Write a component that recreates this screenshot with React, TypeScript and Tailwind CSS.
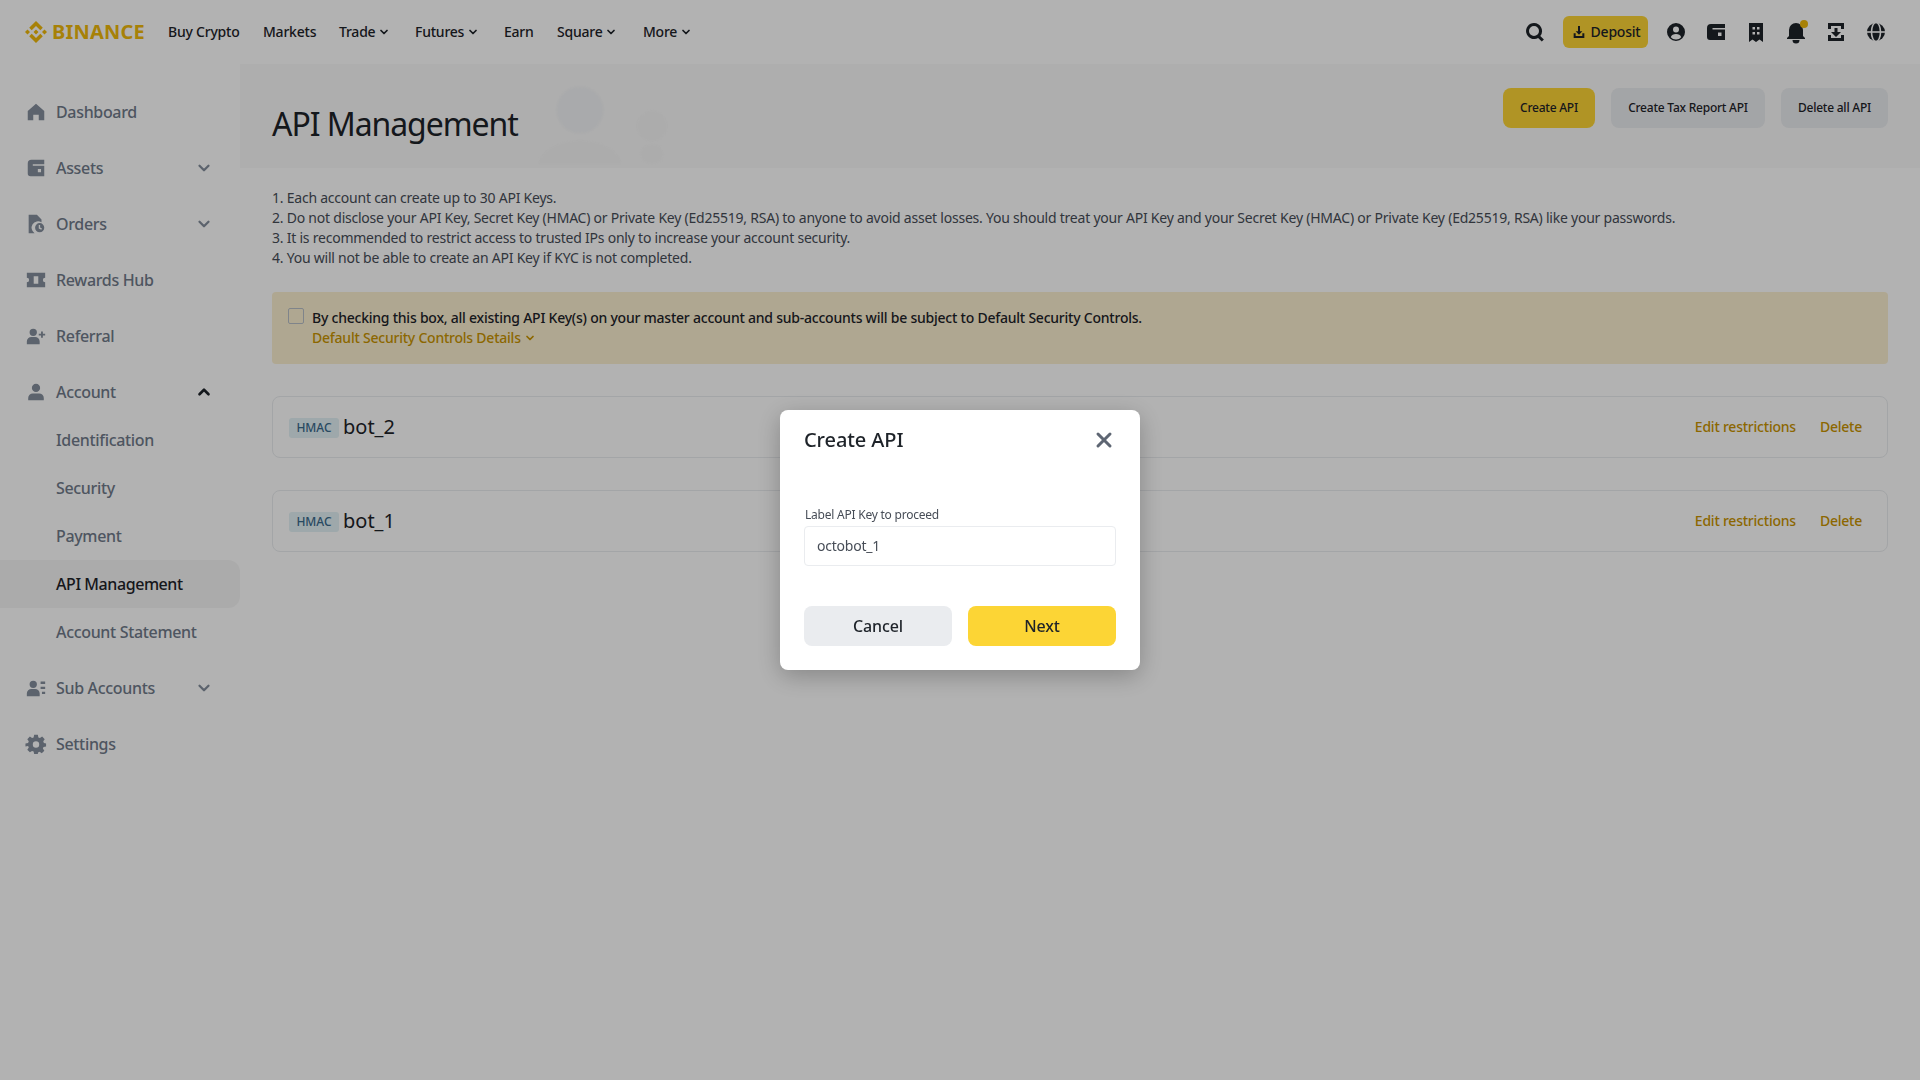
import { ChevronDown, ChevronUp, X } from "lucide-react";

function Logo() {
  return (
    <svg width="24" height="24" viewBox="0 0 24 24" fill="#f0b90b">
      <path d="M7.700 10.300 12 6l4.300 4.300 2.500-2.500L12 1 5.200 7.800zM1 12l2.500-2.500L6 12l-2.500 2.500zM7.700 13.700 12 18l4.300-4.300 2.500 2.500L12 23l-6.800-6.800zM18 12l2.500-2.500L23 12l-2.500 2.500zM14.500 12 12 14.500 9.500 12 12 9.500z" />
    </svg>
  );
}

function NavIcon({ d, size = 24 }: { d: string; size?: number }) {
  return (
    <svg width={size} height={size} viewBox="0 0 24 24" fill="currentColor" fillRule="evenodd" clipRule="evenodd">
      <path d={d} />
    </svg>
  );
}

function GlobeIcon() {
  return (
    <svg width="24" height="24" viewBox="0 0 24 24" fill="none">
      <circle cx="12" cy="12" r="9" fill="currentColor" />
      <ellipse cx="12" cy="12" rx="4.500" ry="9.500" stroke="#fff" strokeWidth="1.600" />
      <path d="M2 12h20" stroke="#fff" strokeWidth="1.600" />
    </svg>
  );
}

const icons = {
  search: "M11 3a8 8 0 0 1 6.300 12.900l3.600 3.600-2.100 2.100-3.700-3.700A8 8 0 1 1 11 3zm0 3a5 5 0 1 0 0 10 5 5 0 0 0 0-10z",
  user: "M12 3a9 9 0 1 1 0 18 9 9 0 0 1 0-18zm0 3.500a3 3 0 1 0 0 6 3 3 0 0 0 0-6zM6.800 17.200A6.600 6.600 0 0 0 12 19.400a6.600 6.600 0 0 0 5.200-2.200c-.6-2-2.700-3.200-5.200-3.200s-4.600 1.200-5.200 3.200z",
  wallet: "M7 4h14v4H8.500v1.500H21V20H6a3 3 0 0 1-3-3V8a4 4 0 0 1 4-4zm7 8.500V16h3.500v-3.500z",
  building: "M5 3h14v19l-3.500-2.500L12 22l-3.500-2.500L5 22zm3.500 4v2.500H11V7zm4.500 0v2.500h2.500V7zm-4.500 5v2.500H11V12zm4.500 0v2.500h2.500V12z",
  bell: "M12 3a7 7 0 0 1 7 7v6l2 2v1H3v-1l2-2v-6a7 7 0 0 1 7-7zm-3.500 17h7a3.500 3.500 0 0 1-7 0z",
  transfer: "M4 3h16v6h-3V6H7v3H4zm6.500 5h3v4H17l-5 5-5-5h3.500zM4 15h3v3h10v-3h3v6H4z",
  download: "M10.500 3h3v8H17l-5 5-5-5h3.500zM4 14h3v4h10v-4h3v7H4z",
  home: "M12 3l9 8v10h-6v-6H9v6H3V11z",
  assets: "M7 3h14v5H8.500v1.500H21V21H6a3 3 0 0 1-3-3V7a4 4 0 0 1 4-4zm7 10v3.500h3.500V13z",
  orders: "M4 2h9l5 5v3.200A7 7 0 0 0 10.400 22H4zm12 9a5 5 0 1 1 0 10 5 5 0 0 1 0-10zm-1 2v3.800l2.800 1.400.7-1.300-2-1V13z",
  rewards: "M2 4h20v5.500a2.500 2.500 0 0 0 0 5V20H2v-5.500a2.500 2.500 0 0 0 0-5zm7.500 4v8h5V8z",
  referral: "M9 4a4 4 0 1 1 0 8 4 4 0 0 1 0-8zm8.500 3h2v2.500H22v2h-2.500V14h-2v-2.500H15v-2h2.500zM2 21v-3a5 5 0 0 1 5-5h4a5 5 0 0 1 5 5v3z",
  person: "M12 3a4.500 4.500 0 1 1 0 9 4.500 4.500 0 0 1 0-9zM3.500 21v-2.500A5 5 0 0 1 8.500 13.500h7a5 5 0 0 1 5 5V21z",
  subaccounts: "M9 4a4 4 0 1 1 0 8 4 4 0 0 1 0-8zM2 21v-3a5 5 0 0 1 5-5h4a5 5 0 0 1 5 5v3zM17 5h5v2.500h-5zm0 5.500h5V13h-5zM18.500 16H22v2.500h-3.500z",
  settings: "M10 2h4l.6 2.800 1.700.7 2.400-1.600 2.800 2.800-1.600 2.400.7 1.700L23 11.400v3.200l-2.800.6-.7 1.700 1.600 2.400-2.800 2.800-2.400-1.600-1.700.7L14 23h-4l-.6-2.800-1.700-.7-2.400 1.600-2.800-2.800 1.600-2.400-.7-1.700L.5 14.600v-3.200l2.900-.6.700-1.700-1.600-2.400 2.800-2.800 2.400 1.600 1.700-.7zm2 7a3.500 3.500 0 1 0 0 7 3.500 3.500 0 0 0 0-7z",
};

function TopNav() {
  const links: { label: string; caret?: boolean; cls: string }[] = [
    { label: "Buy Crypto", cls: "w-[95px]" },
    { label: "Markets", cls: "w-[76px]" },
    { label: "Trade", caret: true, cls: "w-[76px]" },
    { label: "Futures", caret: true, cls: "w-[89px]" },
    { label: "Earn", cls: "w-[53px]" },
    { label: "Square", caret: true, cls: "w-[86px]" },
    { label: "More", caret: true, cls: "w-auto" },
  ];
  return (
    <header className="h-16 flex items-center pl-6 pr-8 bg-white text-[#1e2329]">
      <div className="flex items-center w-[144px] shrink-0">
        <Logo />
        <span className="ml-1 text-[20px] font-bold tracking-[0.2px] text-[#f0b90b]">BINANCE</span>
      </div>
      <nav className="flex items-center text-sm font-medium">
        {links.map((l) => (
          <a key={l.label} className={`flex items-center gap-[3px] ${l.cls}`}>
            {l.label}
            {l.caret && <ChevronDown size={12} strokeWidth={3.5} />}
          </a>
        ))}
      </nav>
      <div className="ml-auto flex items-center">
        <span className="mr-4"><NavIcon d={icons.search} /></span>
        <button className="h-8 w-[85px] flex items-center justify-center gap-1 rounded-md bg-[#fcd535] text-sm font-medium">
          <NavIcon d={icons.download} size={16} />
          Deposit
        </button>
        <div className="flex items-center gap-4 ml-4">
          <NavIcon d={icons.user} />
          <NavIcon d={icons.wallet} />
          <NavIcon d={icons.building} />
          <span className="relative">
            <NavIcon d={icons.bell} />
            <span className="absolute top-0 right-0 size-2 rounded-full bg-[#f0b90b]" />
          </span>
          <NavIcon d={icons.transfer} />
          <GlobeIcon />
        </div>
      </div>
    </header>
  );
}

function SideItem({ icon, label, caret }: { icon: string; label: string; caret?: "up" | "down" }) {
  return (
    <div className="h-12 flex items-center pl-6 pr-[27px] text-[#848e9c]">
      <span className="w-6 flex justify-center">
        <NavIcon d={icon} size={22} />
      </span>
      <span className="ml-2 flex-1 text-base font-medium tracking-[-0.33px] text-[#707a8a]">{label}</span>
      {caret === "down" && <ChevronDown size={18} strokeWidth={3} />}
      {caret === "up" && <ChevronUp size={18} strokeWidth={3.5} className="text-[#1e2329]" />}
    </div>
  );
}

function SubItem({ label, active }: { label: string; active?: boolean }) {
  return (
    <div
      className={`h-12 flex items-center pl-14 text-base font-medium ${
        active ? "bg-[#f5f5f5] rounded-r-xl tracking-[-0.43px] text-[#1e2329]" : "tracking-[-0.33px] text-[#707a8a]"
      }`}
    >
      {label}
    </div>
  );
}

function Sidebar() {
  return (
    <aside className="w-60 shrink-0 pt-6 flex flex-col gap-2">
      <SideItem icon={icons.home} label="Dashboard" />
      <SideItem icon={icons.assets} label="Assets" caret="down" />
      <SideItem icon={icons.orders} label="Orders" caret="down" />
      <SideItem icon={icons.rewards} label="Rewards Hub" />
      <SideItem icon={icons.referral} label="Referral" />
      <div className="flex flex-col">
        <SideItem icon={icons.person} label="Account" caret="up" />
        <SubItem label="Identification" />
        <SubItem label="Security" />
        <SubItem label="Payment" />
        <SubItem label="API Management" active />
        <SubItem label="Account Statement" />
      </div>
      <SideItem icon={icons.subaccounts} label="Sub Accounts" caret="down" />
      <SideItem icon={icons.settings} label="Settings" />
    </aside>
  );
}

function ApiRow({ name }: { name: string }) {
  return (
    <div className="h-[62px] rounded-lg border border-[#eaecef] flex items-center pl-4 pr-[25px]">
      <span className="mt-[2px] w-[50px] h-5 rounded-[3px] bg-[#e2f1f5] text-[#3a6a8c] text-xs font-medium tracking-normal flex items-center justify-center">
        HMAC
      </span>
      <span className="ml-1 text-xl tracking-normal text-[#1e2329]">{name}</span>
      <a className="ml-auto text-sm font-medium text-[#c99400]">Edit restrictions</a>
      <a className="ml-6 text-sm font-medium text-[#c99400]">Delete</a>
    </div>
  );
}

function Main() {
  return (
    <main className="flex-1 min-w-0">
      <section className="relative h-[104px] bg-[#fafafa] pl-8 pr-8 flex items-start justify-between">
        <svg className="absolute left-[280px] top-0 blur-[1px]" width="160" height="104" viewBox="0 0 160 104" fill="#f7f7f7">
          <circle cx="60" cy="46" r="24" fill="#f3f4f6" />
          <path d="M17 100c6-18 24-24 43-24s37 6 43 24z" />
          <circle cx="132" cy="62" r="16" />
          <rect x="120" y="80" width="24" height="20" rx="9" />
        </svg>
        <h1 className="relative mt-[40px] text-[32px] leading-10 tracking-[-1.07px] text-[#1e2329]">API Management</h1>
        <div className="relative mt-6 flex gap-4 text-xs font-medium text-[#1e2329]">
          <button className="h-10 w-[92px] rounded-lg bg-[#fcd535]">Create API</button>
          <button className="h-10 w-[154px] rounded-lg bg-[#eaecef]">Create Tax Report API</button>
          <button className="h-10 w-[107px] rounded-lg bg-[#eaecef]">Delete all API</button>
        </div>
      </section>
      <div className="px-8 pt-5">
        <ol className="text-sm leading-5 text-[#474d57]">
          <li>1. Each account can create up to 30 API Keys.</li>
          <li>2. Do not disclose your API Key, Secret Key (HMAC) or Private Key (Ed25519, RSA) to anyone to avoid asset losses. You should treat your API Key and your Secret Key (HMAC) or Private Key (Ed25519, RSA) like your passwords.</li>
          <li>3. It is recommended to restrict access to trusted IPs only to increase your account security.</li>
          <li>4. You will not be able to create an API Key if KYC is not completed.</li>
        </ol>
        <div className="mt-6 h-[72px] rounded bg-[#fbf0d0] flex items-start pl-4 pt-4">
          <span className="size-4 rounded-[2px] border border-[#b7bdc6]" />
          <div className="ml-2 text-sm leading-5 font-medium">
            <div className="text-[#1e2329]">
              By checking this box, all existing API Key(s) on your master account and sub-accounts will be subject to Default Security Controls.
            </div>
            <a className="flex items-center gap-[3px] text-[#c99400]">
              Default Security Controls Details
              <ChevronDown size={12} strokeWidth={3.5} />
            </a>
          </div>
        </div>
        <div className="mt-8 flex flex-col gap-8">
          <ApiRow name="bot_2" />
          <ApiRow name="bot_1" />
        </div>
      </div>
    </main>
  );
}

function CreateApiModal() {
  return (
    <div className="fixed inset-0 bg-black/30 flex items-center justify-center">
      <div className="w-[360px] h-[260px] bg-white rounded-lg px-6 pt-4 pb-6 shadow-[0_6px_24px_rgba(0,0,0,0.25)] flex flex-col">
        <div className="flex items-center justify-between h-7">
          <h2 className="text-xl font-medium tracking-[-0.1px] text-[#1e2329]">Create API</h2>
          <X size={24} strokeWidth={3} className="text-[#5e6673]" />
        </div>
        <label className="mt-[51px] text-xs leading-5 text-[#474d57] pl-px">Label API Key to proceed</label>
        <div className="mt-px h-10 rounded border border-[#eaecef] flex items-center px-3 text-sm text-[#474d57]">octobot_1</div>
        <div className="mt-10 flex gap-4">
          <button className="flex-1 h-10 rounded-lg bg-[#eaecef] text-base font-medium tracking-[-0.1px] text-[#1e2329]">Cancel</button>
          <button className="flex-1 h-10 rounded-lg bg-[#fcd535] text-base font-medium tracking-[-0.1px] text-[#1e2329]">Next</button>
        </div>
      </div>
    </div>
  );
}

export default function App() {
  return (
    <div className="relative min-h-screen bg-white tracking-[-0.23px] font-['Noto_Sans','Roboto',sans-serif]">
      <TopNav />
      <div className="flex">
        <Sidebar />
        <Main />
      </div>
      <CreateApiModal />
    </div>
  );
}
